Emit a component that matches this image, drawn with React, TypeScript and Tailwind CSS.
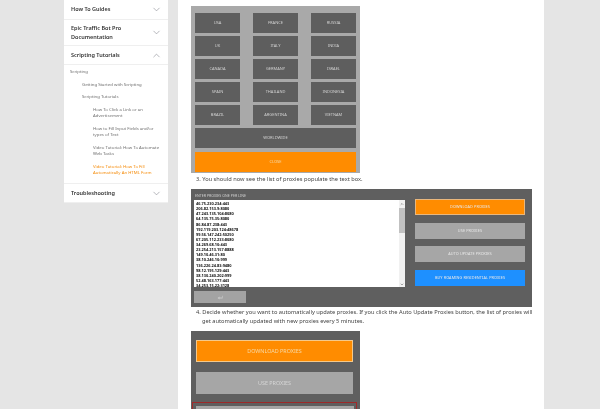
import { ChevronDown, ChevronUp } from "lucide-react";

const FONT = "font-['Noto_Sans','Open_Sans',sans-serif]";

const COUNTRY_ROWS = [
  ["USA", "FRANCE", "RUSSIA"],
  ["UK", "ITALY", "INDIA"],
  ["CANADA", "GERMANY", "ISRAEL"],
  ["SPAIN", "THAILAND", "INDONESIA"],
  ["BRAZIL", "ARGENTINA", "VIETNAM"],
];

const PROXIES = [
  "46.75.230.234:443",
  "206.82.153.9:8080",
  "47.243.135.104:8080",
  "64.135.75.35:8080",
  "86.84.87.238:443",
  "192.119.203.124:48678",
  "99.56.147.242:50250",
  "67.205.112.233:8080",
  "34.269.68.10:443",
  "23.254.213.157:8888",
  "149.10.46.31:80",
  "38.10.246.10:999",
  "136.226.24.83:9480",
  "98.12.195.129:443",
  "38.130.240.202:999",
  "52.48.163.177:443",
  "34.253.15.22:3128",
];

function AccordionHead({ title, open, height }: { title: string; open?: boolean; height: string }) {
  const Icon = open ? ChevronUp : ChevronDown;
  return (
    <div className={`flex items-center justify-between border-b border-[#efefef] pl-[7px] pr-[6px] ${height}`}>
      <span className="text-[5.5px] leading-[9px] font-semibold text-[#333] w-[70px]">{title}</span>
      <Icon className="w-[11px] h-[11px] text-[#85878f]" strokeWidth={1.3} />
    </div>
  );
}

function SideLink({ children, indent, active }: { children: string; indent: string; active?: boolean }) {
  return (
    <p className={`text-[4.3px] leading-[6.5px] ${indent} ${active ? "text-[#f58a07]" : "text-[#6f6f6f]"}`}>
      {children}
    </p>
  );
}

function Sidebar() {
  return (
    <aside className="w-[104px] shrink-0 h-[203px] bg-white">
      <AccordionHead title="How To Guides" height="h-[20px]" />
      <AccordionHead title="Epic Traffic Bot Pro Documentation" height="h-[26px]" />
      <AccordionHead title="Scripting Tutorials" open height="h-[19px]" />
      <div className="h-[119px] border-b border-[#efefef] pt-[3px] flex flex-col">
        <SideLink indent="pl-[6px]">Scripting</SideLink>
        <div className="mt-[6px]">
          <SideLink indent="pl-[18px]">Getting Started with Scripting</SideLink>
        </div>
        <div className="mt-[6px]">
          <SideLink indent="pl-[18px]">Scripting Tutorials</SideLink>
        </div>
        <div className="mt-[6px] flex flex-col gap-[6px] pr-[6px]">
          <SideLink indent="pl-[29px]">How To Click a Link or an Advertisement</SideLink>
          <SideLink indent="pl-[29px]">How to Fill Input Fields and/or types of Text</SideLink>
          <SideLink indent="pl-[29px]">Video Tutorial: How To Automate Web Tasks</SideLink>
          <SideLink indent="pl-[29px]" active>
            Video Tutorial: How To Fill Automatically An HTML Form
          </SideLink>
        </div>
      </div>
      <AccordionHead title="Troubleshooting" height="h-[19px]" />
    </aside>
  );
}

function DarkButton({ label, className }: { label: string; className: string }) {
  return (
    <div className={`bg-[#5e5e5e] h-[20px] flex items-center justify-center text-[4px] text-[#d0d0d0] ${className}`}>
      {label}
    </div>
  );
}

function CountryPanel() {
  return (
    <div className="w-[169px] h-[167px] bg-[#a9a9a9] px-[4px] pt-[7px] flex flex-col">
      <div className="flex flex-col gap-[3px]">
        {COUNTRY_ROWS.map((row) => (
          <div key={row[0]} className="flex justify-between">
            {row.map((c) => (
              <DarkButton key={c} label={c} className="w-[45px]" />
            ))}
          </div>
        ))}
        <DarkButton label="WORLDWIDE" className="w-full" />
      </div>
      <div className="mt-[4px] h-[20px] bg-[#ff8c00] flex items-center justify-center text-[4px] text-[#f4d9a8]">
        CLOSE
      </div>
    </div>
  );
}

function ActionButton({ label, color }: { label: string; color: string }) {
  return (
    <div className={`h-[16px] flex items-center justify-center text-[3.8px] tracking-[0.1px] text-[#e8e8e8] ${color}`}>
      {label}
    </div>
  );
}

function ProxyPanel() {
  return (
    <div className="w-[341px] h-[118px] bg-[#5f5f5f] pl-[3px] pr-[7px] flex">
      <div className="w-[211px] shrink-0 flex flex-col">
        <p className="h-[11px] pt-[5px] text-[3.6px] leading-[4px] text-[#cfcfcf] pl-[1px]">
          ENTER PROXIES ONE PER LINE
        </p>
        <div className="h-[87px] bg-white flex overflow-hidden">
          <div className="flex-1 pl-[2px] pt-[1px] text-[3.9px] leading-[5.12px] font-bold text-[#111]">
            {PROXIES.map((p) => (
              <div key={p}>{p}</div>
            ))}
          </div>
          <div className="w-[6px] bg-[#f1f1f1] flex flex-col items-center">
            <div className="h-[8px] flex items-center">
              <ChevronUp className="w-[4px] h-[4px] text-[#555]" strokeWidth={3} />
            </div>
            <div className="w-[6px] h-[25px] bg-[#c1c1c1]" />
            <div className="flex-1" />
            <ChevronDown className="w-[4px] h-[5px] text-[#555]" strokeWidth={3} />
          </div>
        </div>
        <div className="mt-[4px] w-[52px] h-[12px] bg-[#a3a3a3] flex items-center justify-center">
          <svg width="6" height="5" viewBox="0 0 6 5">
            <path d="M0.5 3 L2.5 1.5 V4.5 Z M2.5 2.6 H5 V0.8 H5.6 V3.4 H2.5 Z" fill="#c9c9c9" />
          </svg>
        </div>
      </div>
      <div className="ml-[10px] flex-1 pt-[10px] flex flex-col gap-[7.5px]">
        <ActionButton label="DOWNLOAD PROXIES" color="bg-[#ff8c00] border-[0.5px] border-[#e9b77d]" />
        <ActionButton label="USE PROXIES" color="bg-[#a6a6a6]" />
        <ActionButton label="AUTO UPDATE PROXIES" color="bg-[#a6a6a6]" />
        <ActionButton label="BUY ROAMING RESIDENTIAL PROXIES" color="bg-[#1e90ff]" />
      </div>
    </div>
  );
}

function LargeButtonsPanel() {
  return (
    <div className="w-[169px] h-[78px] bg-[#5f5f5f] overflow-hidden pt-[9px] pl-[5px] flex flex-col">
      <div className="w-[157px] h-[22px] shrink-0 bg-[#ff8c00] border-[0.5px] border-[#f5c98a] flex items-center justify-center text-[5.4px] text-[#f6d9a6]">
        DOWNLOAD PROXIES
      </div>
      <div className="mt-[10px] w-[157px] h-[22px] shrink-0 bg-[#a6a6a6] flex items-center justify-center text-[5.4px] text-[#d6d6d6]">
        USE PROXIES
      </div>
      <div className="mt-[8px] -ml-[4px] w-[165px] h-[20px] shrink-0 border-[1.5px] border-[#9e2a2a] pt-[2.5px] pl-[2.5px] pr-[2.5px]">
        <div className="h-[20px] bg-[#a6a6a6]" />
      </div>
    </div>
  );
}

export default function App() {
  return (
    <div className={`w-[600px] h-[409px] overflow-hidden bg-[#e5e5e5] flex pl-[64px] blur-[0.35px] ${FONT}`}>
      <Sidebar />
      <main className="ml-[10px] w-[366px] h-[409px] bg-white pl-[13px] pt-[6px] text-[#444]">
        <CountryPanel />
        <p className="h-[15px] mt-[1px] pl-[5px] text-[5.7px] leading-[10px]">
          3. You should now see the list of proxies populate the text box.
        </p>
        <ProxyPanel />
        <div className="mt-[1px] pl-[5px] w-[345px] h-[23px] text-[5.7px] leading-[9px]">
          <p className="pl-[6px] -indent-[6px]">
            4. Decide whether you want to automatically update proxies. If you click the Auto Update Proxies button, the list of proxies will get automatically updated with new proxies every 5 minutes.
          </p>
        </div>
        <LargeButtonsPanel />
      </main>
    </div>
  );
}
